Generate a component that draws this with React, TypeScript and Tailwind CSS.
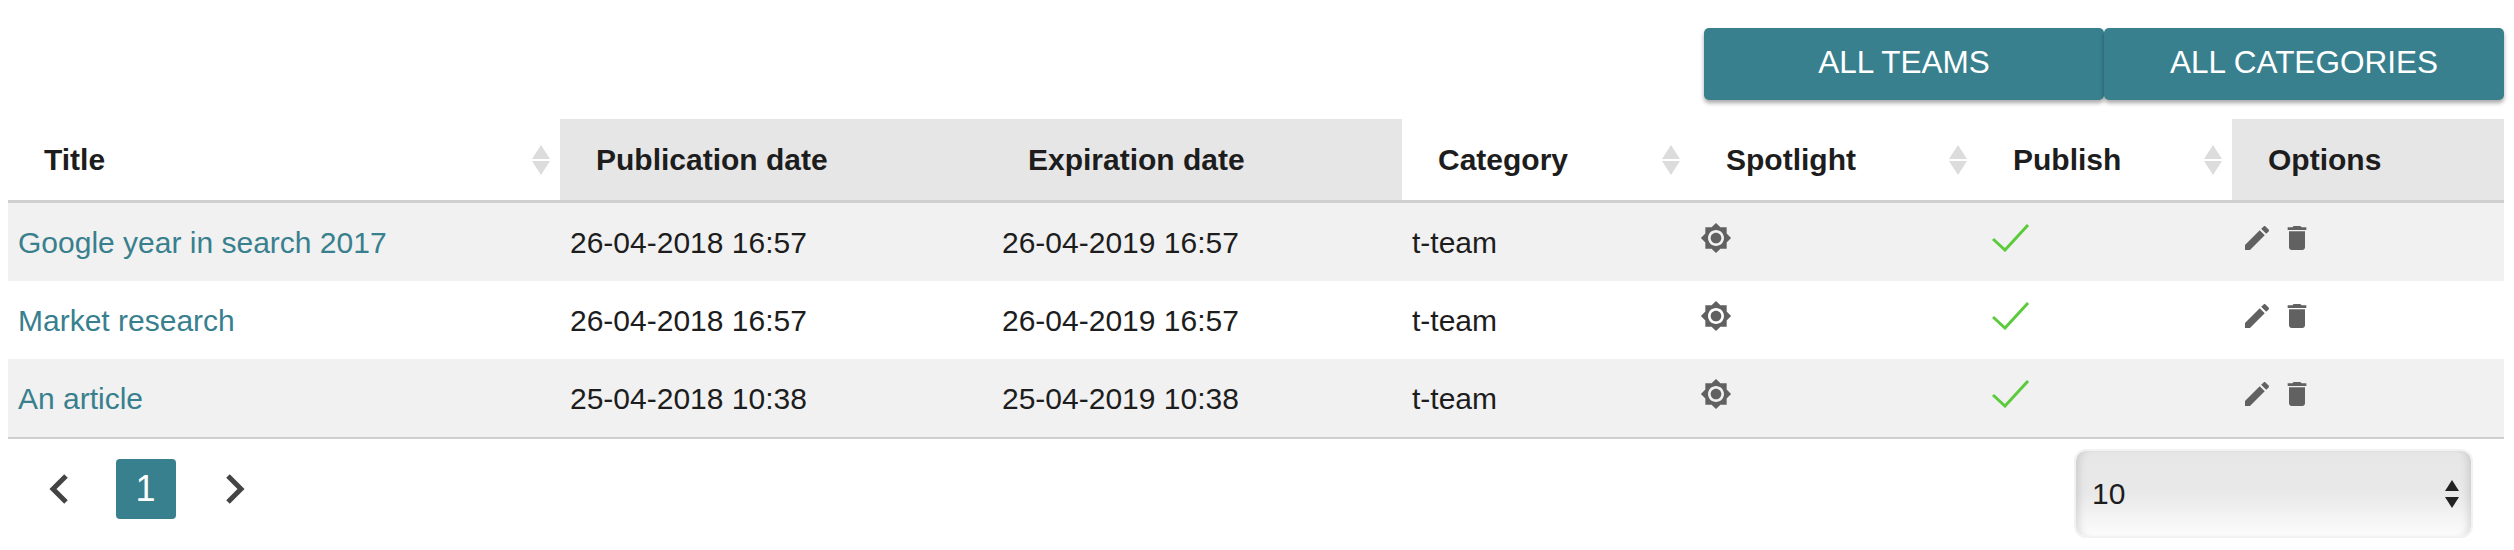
import React from "react";

const rows = [
  { title: "Google year in search 2017", pub: "26-04-2018 16:57", exp: "26-04-2019 16:57" },
  { title: "Market research", pub: "26-04-2018 16:57", exp: "26-04-2019 16:57" },
  { title: "An article", pub: "25-04-2018 10:38", exp: "25-04-2019 10:38" },
];

function SortIcon() {
  return (
    <svg className="absolute right-[10px] top-[26px]" width="18" height="30" viewBox="0 0 18 30" fill="#dcdcdc">
      <path d="M9 0 L18 14 H0 Z" />
      <path d="M9 30 L18 16 H0 Z" />
    </svg>
  );
}

function Th({ label, sort, gray }: { label: string; sort?: boolean; gray?: boolean }) {
  return (
    <th className={`relative h-[84px] border-b-[3px] border-[#cfcfcf] pl-[36px] text-left align-middle font-bold ${gray ? "bg-[#e6e6e6]" : "bg-white"}`}>
      {label}
      {sort && <SortIcon />}
    </th>
  );
}

function Spotlight() {
  return (
    <svg width="32" height="32" viewBox="0 0 24 24" fill="#616161">
      <path d="M20 8.69V4h-4.69L12 .69 8.69 4H4v4.69L.69 12 4 15.31V20h4.69L12 23.31 15.31 20H20v-4.69L23.31 12 20 8.69zM12 18c-3.31 0-6-2.69-6-6s2.69-6 6-6 6 2.69 6 6-2.69 6-6 6zm0-10c-2.21 0-4 1.79-4 4s1.79 4 4 4 4-1.79 4-4-1.79-4-4-4z" />
    </svg>
  );
}

function Check() {
  return (
    <svg width="38" height="28" viewBox="0 0 38 28" fill="none" stroke="#5bcb3b" strokeWidth="3">
      <path d="M1 15 L13 26 L36 1" />
    </svg>
  );
}

function Pencil() {
  return (
    <svg width="32" height="32" viewBox="0 0 24 24" fill="#616161">
      <path d="M3 17.25V21h3.75L17.81 9.94l-3.75-3.75L3 17.25zM20.71 7.04c.39-.39.39-1.02 0-1.41l-2.34-2.34c-.39-.39-1.02-.39-1.41 0l-1.83 1.83 3.75 3.75 1.83-1.83z" />
    </svg>
  );
}

function Trash() {
  return (
    <svg width="32" height="32" viewBox="0 0 24 24" fill="#616161">
      <path d="M6 19c0 1.1.9 2 2 2h8c1.1 0 2-.9 2-2V7H6v12zM19 4h-3.5l-1-1h-5l-1 1H5v2h14V4z" />
    </svg>
  );
}

export default function App() {
  return (
    <main className="h-[550px] w-[2514px] overflow-hidden bg-white px-[10px] pl-[8px] pt-[28px] font-['Liberation_Sans',Arial,sans-serif] text-[30px] text-[#1d1d1d]">
      {/* Filter buttons */}
      <div className="flex justify-end">
        <button className="h-[72px] w-[400px] rounded-[5px] bg-[#38808e] pb-[2px] text-[31.5px] text-white shadow-[0_3px_4px_rgba(0,0,0,0.35)]">
          ALL TEAMS
        </button>
        <button className="h-[72px] w-[400px] rounded-[5px] bg-[#38808e] pb-[2px] text-[31.5px] text-white shadow-[0_3px_4px_rgba(0,0,0,0.35)]">
          ALL CATEGORIES
        </button>
      </div>

      {/* Table */}
      <table className="mt-[19px] w-[2496px] table-fixed border-separate border-spacing-0">
        <colgroup>
          <col className="w-[552px]" />
          <col className="w-[432px]" />
          <col className="w-[410px]" />
          <col className="w-[288px]" />
          <col className="w-[287px]" />
          <col className="w-[255px]" />
          <col className="w-[272px]" />
        </colgroup>
        <thead>
          <tr>
            <Th label="Title" sort />
            <Th label="Publication date" gray />
            <Th label="Expiration date" gray />
            <Th label="Category" sort />
            <Th label="Spotlight" sort />
            <Th label="Publish" sort />
            <Th label="Options" gray />
          </tr>
        </thead>
        <tbody>
          {rows.map((row, i) => (
            <tr key={row.title} className={`h-[78px] ${i % 2 === 0 ? "bg-[#f1f1f1]" : "bg-white"}`}>
              <td className="pl-[10px] text-[#38808e]">{row.title}</td>
              <td className="pl-[10px]">{row.pub}</td>
              <td className="pl-[10px]">{row.exp}</td>
              <td className="pl-[10px]">t-team</td>
              <td className="pl-[10px]">
                <div className="mb-[9px] flex items-center">
                  <Spotlight />
                </div>
              </td>
              <td className="pl-[15px]">
                <div className="mb-[9px] flex items-center">
                  <Check />
                </div>
              </td>
              <td className="pl-[9px]">
                <div className="mb-[9px] flex items-center gap-[8px]">
                  <Pencil />
                  <Trash />
                </div>
              </td>
            </tr>
          ))}
        </tbody>
      </table>

      {/* Footer */}
      <div className="mt-0 flex items-start justify-between border-t-[2px] border-[#cfcfcf]">
        <div className="mt-[20px] flex items-center">
          <svg className="ml-[37px]" width="26" height="32" viewBox="0 0 26 32" fill="none" stroke="#444444" strokeWidth="5">
            <path d="M21 3 L8 16 L21 29" />
          </svg>
          <div className="ml-[45px] flex h-[60px] w-[60px] items-center justify-center rounded-[4px] bg-[#38808e] pr-[1px] text-[36px] text-white">1</div>
          <svg className="ml-[47px]" width="26" height="32" viewBox="0 0 26 32" fill="none" stroke="#444444" strokeWidth="5">
            <path d="M5 3 L18 16 L5 29" />
          </svg>
        </div>
        <div className="mr-[31px] mt-[10px] flex h-[89px] w-[399px] items-center justify-between rounded-[12px] border-[2px] border-[#f2f2f2] bg-gradient-to-b from-[#e6e6e6] via-[#e9e9e9] to-[#fcfcfc] pl-[16px] pr-[12px] shadow-[inset_8px_0_8px_-6px_rgba(0,0,0,0.14),inset_-8px_0_8px_-6px_rgba(0,0,0,0.14)]">
          <span>10</span>
          <svg width="14" height="28" viewBox="0 0 14 28" fill="#222222">
            <path d="M7 0 L14 11 H0 Z" />
            <path d="M7 28 L14 17 H0 Z" />
          </svg>
        </div>
      </div>
    </main>
  );
}
